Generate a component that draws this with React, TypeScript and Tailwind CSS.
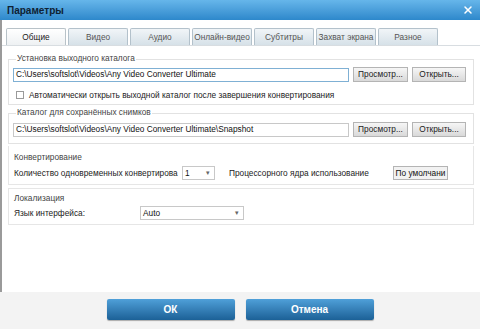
import { X } from 'lucide-react';

const tabs = ['Общие', 'Видео', 'Аудио', 'Онлайн-видео', 'Субтитры', 'Захват экрана', 'Разное'];

function GrayButton({ label, className = '' }: { label: string; className?: string }) {
  return (
    <div
      className={`h-[15px] flex items-center justify-center border border-[#b4b4b4] bg-gradient-to-b from-[#f6f6f6] to-[#d9d9d9] text-[#222] whitespace-nowrap ${className}`}
    >
      {label}
    </div>
  );
}

function Group({ title, children, className = '' }: { title: string; children: React.ReactNode; className?: string }) {
  return (
    <div className={`relative border border-[#e2e2e2] ${className}`}>
      <span className="absolute -top-[7px] left-[7px] bg-white px-[1px] leading-[10px] text-[#444]">{title}</span>
      {children}
    </div>
  );
}

function Select({ value, className = '' }: { value: string; className?: string }) {
  return (
    <div className={`h-[14px] flex items-center justify-between border border-[#c8c8c8] bg-white pl-[2px] pr-[4px] ${className}`}>
      <span className="text-[#111]">{value}</span>
      <span className="text-[7px] text-[#666]">▾</span>
    </div>
  );
}

export default function App() {
  return (
    <div
      className="w-[480px] h-[329px] bg-white flex flex-col text-[8.3px] text-[#333] overflow-hidden"
      style={{ fontFamily: '"Liberation Sans", Arial, sans-serif' }}
    >
      {/* Title bar */}
      <div className="h-[20px] flex items-center justify-between pl-[7px] pr-[6px] bg-gradient-to-b from-[#66b6ea] to-[#2d88cb]">
        <span className="text-[10px] font-bold text-[#0f2233]">Параметры</span>
        <X className="w-[12px] h-[12px] text-white" strokeWidth={3} />
      </div>

      <div className="flex-1 flex flex-col border-l-2 border-[#9a9a9a]">
        {/* Tabs */}
        <div className="flex gap-[2px] pl-[4px] pt-[8px] border-b border-[#d8dde1]">
          {tabs.map((t, i) => (
            <div
              key={t}
              className={`w-[60px] h-[17px] flex items-center justify-center whitespace-nowrap border border-b-0 rounded-t-[2px] ${
                i === 0
                  ? 'border-[#b8c2c8] bg-gradient-to-b from-[#ffffff] to-[#eef1f3] text-[#222]'
                  : 'border-[#b3c1cb] bg-gradient-to-b from-[#f1f5f8] to-[#d6e1e8] text-[#555]'
              }`}
            >
              {t}
            </div>
          ))}
        </div>

        {/* Content */}
        <div className="flex-1 flex flex-col pt-[13px] pl-[6px] pr-[6px]">
          <Group title="Установка выходного каталога" className="h-[46px] pt-[7px] pl-[4px]">
            <div className="flex items-center gap-[4px]">
              <div className="w-[336px] h-[14px] flex items-center border border-[#7fb0d4] pl-[2px] text-[#111]">
                C:\Users\softslot\Videos\Any Video Converter Ultimate
              </div>
              <GrayButton label="Просмотр..." className="w-[55px]" />
              <GrayButton label="Открыть..." className="w-[54px]" />
            </div>
            <div className="flex items-center gap-[5px] mt-[7px] pl-[3px]">
              <div className="w-[8px] h-[8px] border border-[#9a9a9a] bg-white" />
              <span className="text-[#222]">Автоматически открыть выходной каталог после завершения конвертирования</span>
            </div>
          </Group>

          <Group title="Каталог для сохранённых снимков" className="h-[31px] mt-[8px] pt-[8px] pl-[4px]">
            <div className="flex items-center gap-[4px]">
              <div className="w-[336px] h-[14px] flex items-center border border-[#c8c8c8] pl-[2px] text-[#111]">
                C:\Users\softslot\Videos\Any Video Converter Ultimate\Snapshot
              </div>
              <GrayButton label="Просмотр..." className="w-[55px]" />
              <GrayButton label="Открыть..." className="w-[54px]" />
            </div>
          </Group>

          <div className="h-[39px] mt-[2px] border border-[#e6e6e6] border-t-0 flex flex-col pl-[5px] pt-[6px]">
            <span className="text-[#444] leading-[10px]">Конвертирование</span>
            <div className="flex items-center mt-[4px]">
              <span className="w-[168px] whitespace-nowrap text-[#222]">Количество одновременных конвертирова</span>
              <Select value="1" className="w-[33px]" />
              <span className="ml-[14px] w-[164px] whitespace-nowrap text-[#222]">Процессорного ядра использование</span>
              <div className="w-[55px] h-[14px] flex items-center justify-center border border-[#b4b4b4] bg-[#f2f2f2] text-[#111] whitespace-nowrap">
                По умолчани
              </div>
            </div>
          </div>

          <div className="h-[37px] mt-[3px] border border-[#e6e6e6] flex flex-col pl-[5px] pt-[4px]">
            <span className="text-[#444] leading-[10px]">Локализация</span>
            <div className="flex items-center mt-[3px]">
              <span className="w-[126px] text-[#222]">Язык интерфейса:</span>
              <Select value="Auto" className="w-[104px]" />
            </div>
          </div>
        </div>
      </div>

      {/* Footer */}
      <div className="h-[37px] bg-[#f3f3f3] flex items-center justify-center gap-[11px] pb-[2px]">
        <div className="w-[128px] h-[21px] flex items-center justify-center rounded-[2px] bg-gradient-to-b from-[#4fa0d9] to-[#1c6197] text-white font-bold text-[10px] shadow-[0_1px_1px_rgba(0,0,0,0.3)]">
          ОК
        </div>
        <div className="w-[128px] h-[21px] flex items-center justify-center rounded-[2px] bg-gradient-to-b from-[#4fa0d9] to-[#1c6197] text-white font-bold text-[10px] shadow-[0_1px_1px_rgba(0,0,0,0.3)]">
          Отмена
        </div>
      </div>
    </div>
  );
}
